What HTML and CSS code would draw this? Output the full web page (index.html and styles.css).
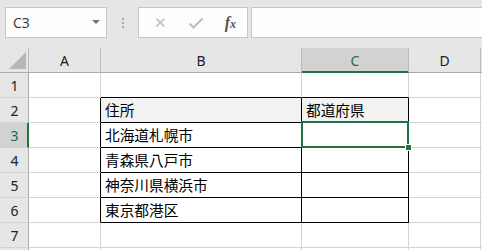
FILE: index.html
```html
<!DOCTYPE html>
<html>
<head>
<meta name="viewport" content="width=device-width, initial-scale=1">
<title>Sheet</title>
<link rel="stylesheet" href="styles.css">
</head>
<body>

<div class="toolbar">
    <div class="namebox">
        <span>C3</span>
        <span class="caret"></span>
    </div>
    <div class="dots"><i></i><i></i><i></i></div>
    <div class="fxbox">
        <span class="cancel">&#x2715;</span>
        <svg class="check" width="16" height="12" viewBox="0 0 16 12"><path d="M1.5 6.5 L5.5 10.5 L14.5 1.5" fill="none" stroke="#bdbdbd" stroke-width="2"/></svg>
        <span class="fx">f<sub>x</sub></span>
    </div>
    <div class="formula"></div>
</div>

<div class="sheet">
    <!-- column headers -->
    <div class="corner"><span class="tri"></span></div>
    <div class="colhead">A</div>
    <div class="colhead">B</div>
    <div class="colhead sel">C</div>
    <div class="colhead">D</div>
    <div class="colhead"></div>

    <!-- row 1 -->
    <div class="rowhead">1</div>
    <div class="cell"></div>
    <div class="cell bb"></div>
    <div class="cell bb"></div>
    <div class="cell"></div>
    <div class="cell"></div>

    <!-- row 2 -->
    <div class="rowhead">2</div>
    <div class="cell br"></div>
    <div class="cell box head">住所</div>
    <div class="cell box head">都道府県</div>
    <div class="cell"></div>
    <div class="cell"></div>

    <!-- row 3 -->
    <div class="rowhead sel">3</div>
    <div class="cell br"></div>
    <div class="cell box">北海道札幌市</div>
    <div class="cell box active"><span class="handle"></span></div>
    <div class="cell"></div>
    <div class="cell"></div>

    <!-- row 4 -->
    <div class="rowhead">4</div>
    <div class="cell br"></div>
    <div class="cell box">青森県八戸市</div>
    <div class="cell box"></div>
    <div class="cell"></div>
    <div class="cell"></div>

    <!-- row 5 -->
    <div class="rowhead">5</div>
    <div class="cell br"></div>
    <div class="cell box">神奈川県横浜市</div>
    <div class="cell box"></div>
    <div class="cell"></div>
    <div class="cell"></div>

    <!-- row 6 -->
    <div class="rowhead">6</div>
    <div class="cell br"></div>
    <div class="cell box">東京都港区</div>
    <div class="cell box"></div>
    <div class="cell"></div>
    <div class="cell"></div>

    <!-- row 7 -->
    <div class="rowhead">7</div>
    <div class="cell"></div>
    <div class="cell"></div>
    <div class="cell"></div>
    <div class="cell"></div>
    <div class="cell"></div>

    <!-- row 8, only its top edge shows -->
    <div class="rowhead"></div>
    <div class="cell"></div>
    <div class="cell"></div>
    <div class="cell"></div>
    <div class="cell"></div>
    <div class="cell"></div>
</div>

</body>
</html>
```

FILE: styles.css
```css
body {
    margin: 0;
    height: 250px;
    font-family: "Noto Sans", "Noto Sans CJK JP", sans-serif;
    background-color: #ffffff;
    overflow: hidden;
}

/* Formula bar */
.toolbar {
    height: 48px;
    box-sizing: border-box;
    background-color: #e6e6e6;
    padding: 7px 0 0 5px;
    display: flex;
    align-items: flex-start;
}

.namebox {
    width: 102px;
    height: 31px;
    box-sizing: border-box;
    background-color: #fdfdfd;
    border: 1px solid #c6c6c6;
    display: flex;
    align-items: center;
    justify-content: space-between;
    padding: 0 6px 0 7px;
    font-family: "Open Sans", "Noto Sans", sans-serif;
    font-size: 14px;
    color: #333;
}

.caret {
    width: 0;
    height: 0;
    border-left: 4px solid transparent;
    border-right: 4px solid transparent;
    border-top: 4px solid #777;
    margin-bottom: 2px;
}

.dots {
    width: 31px;
    height: 31px;
    display: flex;
    flex-direction: column;
    align-items: center;
    justify-content: center;
    gap: 2px;
}

.dots i {
    display: block;
    width: 2px;
    height: 2px;
    background-color: #a8a8a8;
}

.fxbox {
    width: 110px;
    height: 31px;
    box-sizing: border-box;
    background-color: #fdfdfd;
    border: 1px solid #c6c6c6;
    display: flex;
    align-items: center;
    padding: 0 11px 0 15px;
    justify-content: space-between;
    margin-right: 3px;
}

.cancel {
    color: #bdbdbd;
    font-size: 15px;
    font-family: "DejaVu Sans", sans-serif;
}

.check {
    display: block;
}

.fx {
    font-family: "Liberation Serif", serif;
    font-style: italic;
    font-weight: bold;
    font-size: 16px;
    color: #555;
}

.fx sub {
    font-size: 12px;
    vertical-align: 0;
}

.formula {
    flex: 1;
    height: 31px;
    box-sizing: border-box;
    background-color: #fdfdfd;
    border: 1px solid #c6c6c6;
    border-right: none;
}

/* Grid */
.sheet {
    display: grid;
    grid-template-columns: 29px 72px 201px 107px 72px 1fr;
    grid-auto-rows: 25px;
}

.sheet > div {
    box-sizing: border-box;
}

.corner {
    background-color: #e6e6e6;
    border-right: 1px solid #bcbcbc;
    border-bottom: 1px solid #ababab;
    display: flex;
    align-items: flex-end;
    justify-content: flex-end;
    padding: 0 2px 3px 0;
}

.tri {
    width: 0;
    height: 0;
    border-left: 17px solid transparent;
    border-bottom: 17px solid #b7b7b7;
}

.colhead {
    background-color: #e6e6e6;
    border-right: 1px solid #bcbcbc;
    border-bottom: 1px solid #ababab;
    display: flex;
    align-items: center;
    justify-content: center;
    font-size: 14px;
    color: #222;
    padding-top: 1px;
}

.colhead.sel {
    background-color: #d2d2d2;
    border-bottom: 2px solid #217346;
    color: #1e6b41;
}

.rowhead {
    background-color: #e6e6e6;
    border-right: 1px solid #ababab;
    border-bottom: 1px solid #d4d4d4;
    display: flex;
    align-items: center;
    justify-content: center;
    font-size: 14px;
    color: #222;
    padding-left: 1px;
}

.rowhead.sel {
    background-color: #d2d2d2;
    border-right: 2px solid #217346;
    color: #1e6b41;
    padding-left: 2px;
}

.cell {
    border-right: 1px solid #d4d4d4;
    border-bottom: 1px solid #d4d4d4;
    font-family: "Noto Sans CJK JP", sans-serif;
    font-size: 14.67px;
    color: #000;
    display: flex;
    align-items: flex-end;
    padding: 0 0 1px 4px;
    line-height: 22px;
}

/* Table borders */
.cell.bb {
    border-bottom-color: #000;
}

.cell.br {
    border-right-color: #000;
}

.cell.box {
    border-right-color: #000;
    border-bottom-color: #000;
}

.cell.head {
    background-color: #f2f2f2;
}

/* Selected cell */
.cell.active {
    position: relative;
}

.cell.active::after {
    content: "";
    position: absolute;
    top: -2px;
    left: -1px;
    right: -1px;
    bottom: -1px;
    border: 2px solid #217346;
}

.handle {
    position: absolute;
    right: -4px;
    bottom: -4px;
    width: 5px;
    height: 5px;
    background-color: #217346;
    border: 1px solid #fff;
    z-index: 1;
}
```
